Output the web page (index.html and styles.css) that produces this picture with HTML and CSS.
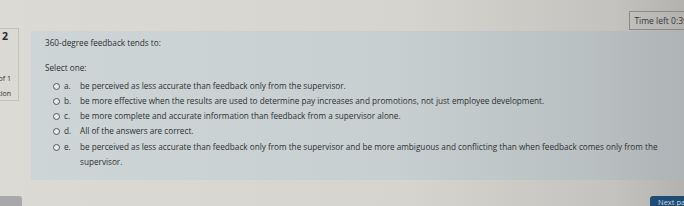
FILE: index.html
```html
<!DOCTYPE html>
<html lang="en">
<head>
  <meta charset="UTF-8">
  <title>Quiz</title>
  <link rel="stylesheet" href="styles.css">
</head>
<body>
  <div class="topbar">
    <div class="timer">Time left 0:39:3</div>
  </div>

  <div class="main">
    <div class="info">
      <h3 class="qno">Question 2</h3>
      <div class="grade">Marked out of 1</div>
      <div class="flag">Flag question</div>
    </div>

    <div class="question">
      <p class="qtext">360-degree feedback tends to:</p>
      <p class="prompt">Select one:</p>
      <div class="answers">
        <label class="opt"><span class="radio"></span><span class="letter">a.</span><span class="txt">be perceived as less accurate than feedback only from the supervisor.</span></label>
        <label class="opt"><span class="radio"></span><span class="letter">b.</span><span class="txt">be more effective when the results are used to determine pay increases and promotions, not just employee development.</span></label>
        <label class="opt"><span class="radio"></span><span class="letter">c.</span><span class="txt">be more complete and accurate information than feedback from a supervisor alone.</span></label>
        <label class="opt"><span class="radio"></span><span class="letter">d.</span><span class="txt">All of the answers are correct.</span></label>
        <label class="opt"><span class="radio"></span><span class="letter">e.</span><span class="txt">be perceived as less accurate than feedback only from the supervisor and be more ambiguous and conflicting than when feedback comes only from the supervisor.</span></label>
      </div>
    </div>
  </div>

  <div class="footer">
    <button class="btn prev">Previous</button>
    <button class="btn next">Next page</button>
  </div>
</body>
</html>
```

FILE: styles.css
```css
html, body {
  height: 206px;
  overflow: hidden;
}
body {
  margin: 0;
  font-family: "Open Sans", "Liberation Sans", sans-serif;
  color: #2e3032;
  background: linear-gradient(90deg, #dcdad5 0%, #d6d4cf 60%, #c4c2be 90%, #b3b2af 100%);
}
.topbar {
  height: 31px;
  display: flex;
  justify-content: flex-end;
  align-items: flex-start;
}
.timer {
  margin-top: 11px;
  margin-right: -16px;
  padding: 3px 4px;
  border: 1px solid #8d8a86;
  font-size: 8.5px;
  white-space: nowrap;
  color: #35373a;
}
.main {
  display: flex;
  align-items: flex-start;
}
.info {
  width: 80px;
  margin-left: -61px;
  margin-top: -3px;
  height: 73px;
  padding: 0 7px 0 0;
  box-sizing: border-box;
  border: 1px solid #c3c1bc;
  background: #dbd9d4;
  font-size: 7px;
  text-align: right;
  white-space: nowrap;
  overflow: hidden;
}
.qno {
  margin: 0 0 31px 0;
  padding-right: 3px;
  font-size: 10.5px;
  line-height: 14px;
  font-weight: bold;
  color: #2a2c2e;
}
.grade {
  line-height: 9px;
  margin-bottom: 6px;
}
.flag {
  line-height: 9px;
}
.question {
  flex: 1;
  margin-left: 12px;
  margin-right: -4px;
  height: 149px;
  padding: 6px 14px 0 14px;
  box-sizing: border-box;
  background: linear-gradient(90deg, #cdd5d6 0%, #c7cfd1 55%, #b9c0c2 85%, #aeb3b5 100%);
  font-size: 8.2px;
}
.qtext {
  margin: 0;
  line-height: 12px;
}
.prompt {
  margin: 13px 0 4px 0;
  line-height: 12px;
}
.opt {
  display: flex;
  align-items: flex-start;
  line-height: 15px;
}
.opt:last-child {
  margin-top: 1px;
}
.radio {
  flex: none;
  width: 5px;
  height: 5px;
  margin: 4.5px 4px 0 8px;
  border: 1px solid #55585b;
  border-radius: 50%;
  background: #e6ebec;
}
.letter {
  flex: none;
  width: 16px;
}
.txt {
  flex: 1;
  padding-right: 8px;
}
.footer {
  display: flex;
  justify-content: space-between;
  margin-top: 16px;
}
.btn {
  height: 10px;
  border: none;
  border-radius: 3px 3px 0 0;
  font-family: inherit;
  font-size: 7.5px;
  line-height: 10px;
  padding: 1px 8px 0 8px;
  text-align: left;
  white-space: nowrap;
  overflow: hidden;
}
.prev {
  width: 24px;
  margin-left: -2px;
  background: #a8a8aa;
  color: #a8a8aa;
}
.next {
  width: 50px;
  margin-right: -16px;
  background: #1f4c75;
  color: #c9d6e3;
}
```
